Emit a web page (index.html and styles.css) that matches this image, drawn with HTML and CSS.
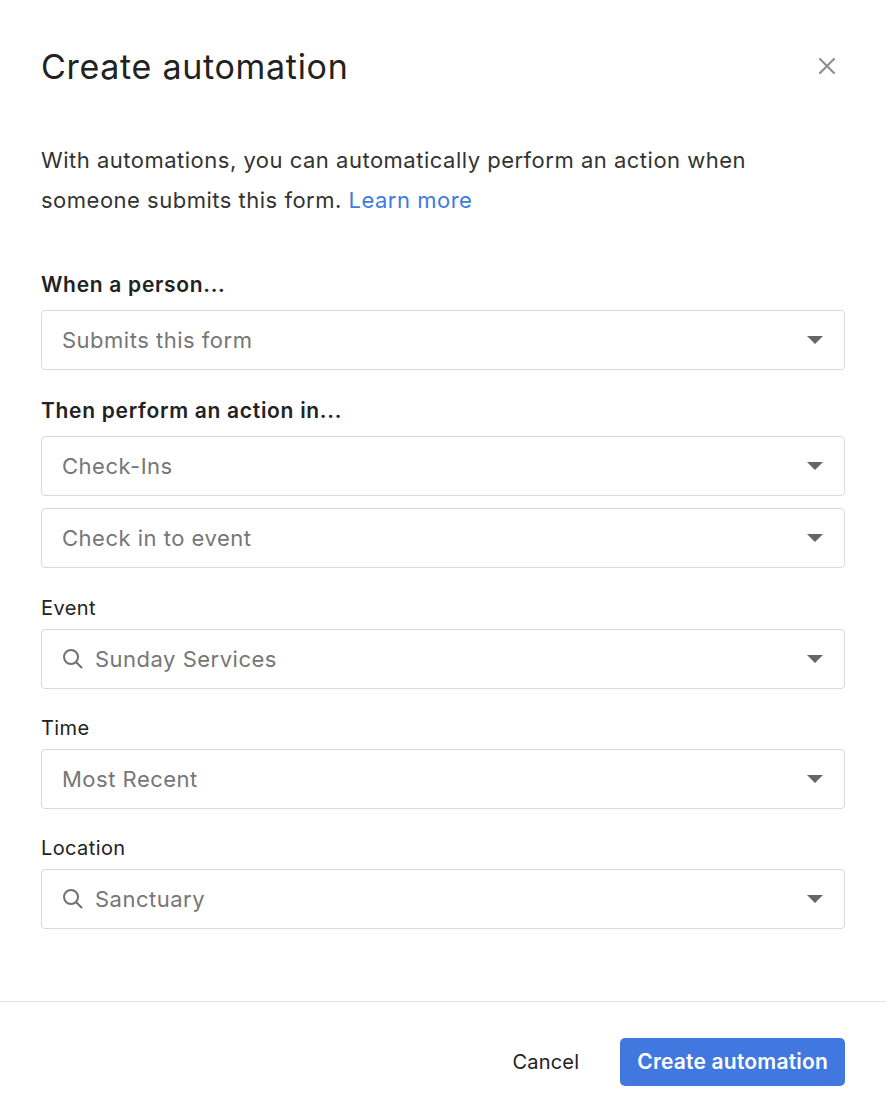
FILE: index.html
```html
<!DOCTYPE html>
<html lang="en">
<head>
  <meta charset="UTF-8">
  <meta name="viewport" content="width=device-width, initial-scale=1.0">
  <title>Create automation</title>
  <link rel="stylesheet" href="styles.css">
</head>
<body>
  <div class="modal">
    <div class="modal-header">
      <h1>Create automation</h1>
      <button class="close" aria-label="Close">
        <svg width="18" height="18" viewBox="0 0 18 18"><path d="M2 2 L16 16 M16 2 L2 16" stroke="#8f8f8f" stroke-width="2.2" stroke-linecap="round"/></svg>
      </button>
    </div>

    <div class="modal-body">
      <p class="intro">With automations, you can automatically perform an action when someone submits this form. <a href="#">Learn more</a></p>

      <div class="group group-trigger">
        <label class="heading">When a person...</label>
        <div class="select"><span>Submits this form</span><i class="caret"></i></div>
      </div>

      <div class="group group-action">
        <label class="heading">Then perform an action in...</label>
        <div class="select"><span>Check-Ins</span><i class="caret"></i></div>
        <div class="select"><span>Check in to event</span><i class="caret"></i></div>
      </div>

      <div class="group">
        <label>Event</label>
        <div class="select search">
          <svg class="mag" width="22" height="22" viewBox="0 0 22 22"><circle cx="9" cy="9" r="7" fill="none" stroke="#6f6f6f" stroke-width="2"/><path d="M14 14 L19.5 19.5" stroke="#6f6f6f" stroke-width="2" stroke-linecap="round"/></svg>
          <span>Sunday Services</span><i class="caret"></i>
        </div>
      </div>

      <div class="group">
        <label>Time</label>
        <div class="select"><span>Most Recent</span><i class="caret"></i></div>
      </div>

      <div class="group">
        <label>Location</label>
        <div class="select search">
          <svg class="mag" width="22" height="22" viewBox="0 0 22 22"><circle cx="9" cy="9" r="7" fill="none" stroke="#6f6f6f" stroke-width="2"/><path d="M14 14 L19.5 19.5" stroke="#6f6f6f" stroke-width="2" stroke-linecap="round"/></svg>
          <span>Sanctuary</span><i class="caret"></i>
        </div>
      </div>
    </div>

    <div class="modal-footer">
      <button class="btn-cancel">Cancel</button>
      <button class="btn-primary">Create automation</button>
    </div>
  </div>
</body>
</html>
```

FILE: styles.css
```css
/* Global */
body {
  margin: 0;
  font-family: Inter, "Noto Sans", sans-serif;
  background-color: #ffffff;
  color: #222;
}

.modal {
  width: 886px;
  height: 1108px;
  display: flex;
  flex-direction: column;
}

/* Header */
.modal-header {
  display: flex;
  justify-content: space-between;
  align-items: center;
  padding: 42px 41px 0 41px;
  height: 48px;
}

.modal-header h1 {
  margin: 0;
  font-size: 34px;
  font-weight: 400;
  color: #222;
  letter-spacing: 0.7px;
}

.close {
  background: none;
  border: 0;
  padding: 0;
  width: 18px;
  height: 18px;
  margin-right: 9px;
  cursor: pointer;
}

/* Body */
.modal-body {
  flex: 1;
  padding: 0 41px;
}

.intro {
  margin: 50px 0 52px;
  font-size: 22px;
  line-height: 40px;
  letter-spacing: 0.5px;
  color: #333;
}

.intro a {
  color: #3d7be0;
  text-decoration: none;
}

.group {
  margin-bottom: 26px;
}

.group-trigger {
  margin-bottom: 28px;
}

.group-action {
  margin-bottom: 27px;
}

.group label {
  display: block;
  font-size: 20px;
  line-height: 26px;
  letter-spacing: 0.4px;
  margin-bottom: 8px;
  color: #222;
}

.group label.heading {
  font-size: 21px;
  font-weight: 600;
  letter-spacing: 0.7px;
  margin-bottom: 12px;
}

.select {
  box-sizing: border-box;
  height: 60px;
  border: 1px solid #d9d9d9;
  border-radius: 4px;
  display: flex;
  align-items: center;
  padding: 0 21px 0 20px;
  font-size: 22px;
  letter-spacing: 0.5px;
  color: #767676;
  margin-bottom: 12px;
}

.select:last-child {
  margin-bottom: 0;
}

.select span {
  flex: 1;
}

.select.search .mag {
  margin-right: 11px;
}

.caret {
  width: 0;
  height: 0;
  border-left: 8px solid transparent;
  border-right: 8px solid transparent;
  border-top: 8px solid #666;
}

/* Footer */
.modal-footer {
  border-top: 1px solid #e3e3e3;
  height: 107px;
  box-sizing: border-box;
  padding: 13px 41px 0;
  display: flex;
  justify-content: flex-end;
  align-items: center;
  gap: 35px;
}

.btn-cancel {
  background: none;
  border: 0;
  font-family: inherit;
  font-size: 20px;
  letter-spacing: 0.2px;
  color: #222;
  cursor: pointer;
}

.btn-primary {
  font-family: inherit;
  font-size: 21px;
  font-weight: 600;
  letter-spacing: 0.2px;
  color: #fff;
  background-color: #4178e0;
  border: 0;
  border-radius: 5px;
  height: 48px;
  padding: 0 17px;
  cursor: pointer;
}
```
